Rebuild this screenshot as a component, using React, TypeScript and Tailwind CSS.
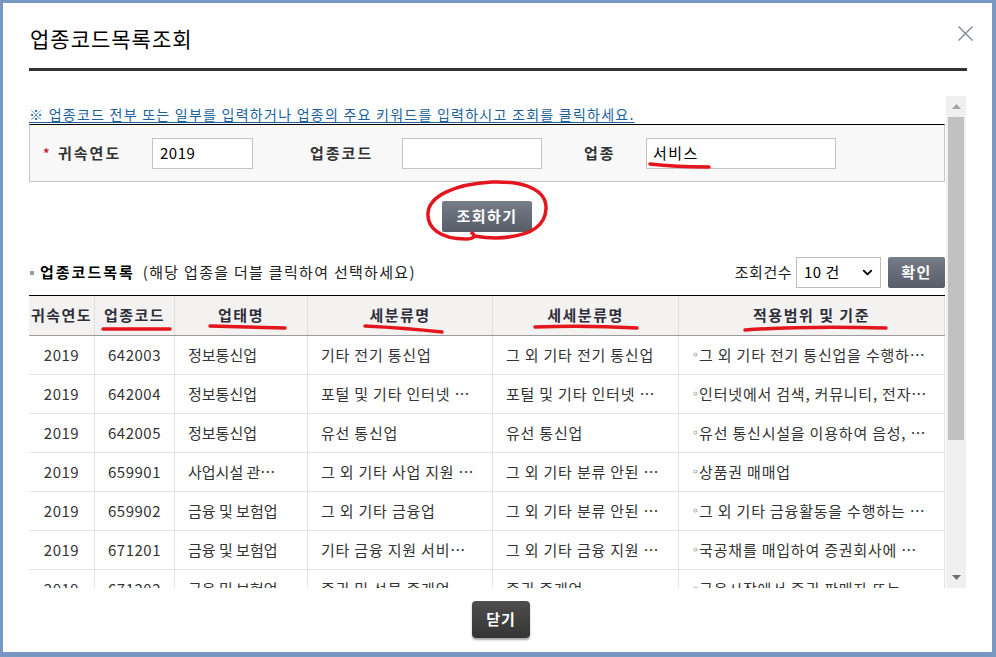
import { ChevronDown } from 'lucide-react';

const rows = [
  ['2019', '642003', '정보통신업', '기타 전기 통신업', '그 외 기타 전기 통신업', '그 외 기타 전기 통신업을 수행하…'],
  ['2019', '642004', '정보통신업', '포털 및 기타 인터넷 …', '포털 및 기타 인터넷 …', '인터넷에서 검색, 커뮤니티, 전자…'],
  ['2019', '642005', '정보통신업', '유선 통신업', '유선 통신업', '유선 통신시설을 이용하여 음성, …'],
  ['2019', '659901', '사업시설 관…', '그 외 기타 사업 지원 …', '그 외 기타 분류 안된 …', '상품권 매매업'],
  ['2019', '659902', '금융 및 보험업', '그 외 기타 금융업', '그 외 기타 분류 안된 …', '그 외 기타 금융활동을 수행하는 …'],
  ['2019', '671201', '금융 및 보험업', '기타 금융 지원 서비…', '그 외 기타 금융 지원 …', '국공채를 매입하여 증권회사에 …'],
  ['2019', '671202', '금융 및 보험업', '증권 및 선물 중개업', '증권 중개업', '금융시장에서 증권 판매자 또는 …'],
];

const headers = ['귀속연도', '업종코드', '업태명', '세분류명', '세세분류명', '적용범위 및 기준'];
const cols = 'grid grid-cols-[66px_80px_133px_185px_186px_266px]';

function RedMarks() {
  // hand-drawn red annotations lying over the dialog
  return (
    <svg
      className="absolute left-0 top-0 pointer-events-none"
      width="996"
      height="657"
      viewBox="0 0 996 657"
      fill="none"
      stroke="#e3161d"
      strokeWidth="3.5"
      strokeLinecap="round"
      strokeLinejoin="round"
    >
      <path d="M472 233 C476 236 474 239 466 239 C440 239 427 228 428 213 C429 196 455 184 492 182 C525 181 547 190 546 209 C545 228 526 237 496 238 C488 238 480 237 474 236" />
      <path d="M650 164 Q675 167 709 167" />
      <path d="M103 329 L170 329" />
      <path d="M210 326 Q250 327 285 328" />
      <path d="M365 326 Q405 328 442 332" />
      <path d="M535 327 Q585 325 637 328" />
      <path d="M745 330 Q800 326 886 328" />
    </svg>
  );
}

export default function App() {
  return (
    <div
      className="relative w-[996px] h-[657px] bg-[#7898c3] pt-[3px] pl-[3px] pr-[4px] pb-[5px] overflow-hidden"
      style={{ fontFamily: "'Noto Sans CJK KR', 'Noto Sans', sans-serif" }}
    >
      <div className="relative h-full bg-white flex flex-col">
        {/* title */}
        <div className="h-[65px] pl-[27px] pt-[23px]">
          <h2 className="text-[21px] leading-[25px] text-black tracking-[1px]">업종코드목록조회</h2>
        </div>
        <button type="button" className="absolute left-[955px] top-[23px] w-[15px] h-[15px]">
          <svg width="15" height="15" viewBox="0 0 15 15" stroke="#7d8294" strokeWidth="1.3">
            <path d="M0.5 0.5 L14.5 14.5 M14.5 0.5 L0.5 14.5" />
          </svg>
        </button>
        <div className="ml-[26px] w-[938px] h-[3px] bg-[#333]" />

        {/* scroll area */}
        <div className="ml-[26px] mt-[25px] w-[938px] h-[492px] flex">
          <div className="w-[916px] h-full overflow-hidden">
            <p className="mt-[8px] h-[20px] text-[14px] leading-[20px] text-[#1a5f9e] underline underline-offset-2 tracking-[1.25px] whitespace-nowrap">
              ※ 업종코드 전부 또는 일부를 입력하거나 업종의 주요 키워드를 입력하시고 조회를 클릭하세요.
            </p>

            <div className="h-[58px] bg-[#f8f8f8] border border-[#c6c6c6] border-t-black flex items-center pl-[13px] text-[15px] text-[#333] font-bold">
              <span className="w-[15px] text-[#c4262c] text-[13px]">*</span>
              <span className="w-[94px] tracking-[2px]">귀속연도</span>
              <div className="w-[101px] h-[31px] border border-[#c3c3c3] bg-white px-[7px] flex items-center font-normal text-black tracking-[0.5px]">2019</div>
              <span className="ml-[57px] w-[92px] tracking-[2px]">업종코드</span>
              <div className="w-[140px] h-[31px] border border-[#c3c3c3] bg-white" />
              <span className="ml-[42px] w-[62px] tracking-[2px]">업종</span>
              <div className="w-[190px] h-[31px] border border-[#c3c3c3] bg-white px-[6px] flex items-center font-normal text-black tracking-[1.5px]">서비스</div>
            </div>

            <div className="mt-[19px] flex pl-[413px]">
              <button
                type="button"
                className="w-[90px] h-[31px] rounded-[2px] bg-gradient-to-b from-[#777d88] to-[#565c68] text-white text-[15px] font-bold tracking-[1.5px]"
              >
                조회하기
              </button>
            </div>

            <div className="mt-[25px] h-[31px] flex items-center">
              <span className="w-[4px] h-[4px] bg-[#9a9a9a] ml-[1px]" />
              <span className="ml-[6px] text-[15px] font-bold text-black tracking-[2px]">업종코드목록</span>
              <span className="ml-[8px] text-[15px] text-[#222] tracking-[1.3px]">(해당 업종을 더블 클릭하여 선택하세요)</span>
              <span className="ml-auto text-[15px] text-[#222] tracking-[0.5px]">조회건수</span>
              <div className="ml-[4px] w-[85px] h-[31px] border border-[#bdbdbd] bg-white flex items-center pl-[7px] pr-[5px] text-[15px] text-black">
                <span className="tracking-[0.5px]">10 건</span>
                <ChevronDown className="ml-auto w-[15px] h-[15px]" strokeWidth={3} />
              </div>
              <button
                type="button"
                className="ml-[7px] w-[57px] h-[31px] rounded-[2px] bg-gradient-to-b from-[#777d88] to-[#565c68] text-white text-[15px] font-bold tracking-[1.5px]"
              >
                확인
              </button>
            </div>

            {/* table */}
            <div className="mt-[7px] border-t border-black">
              <div className={`${cols} h-[40px] bg-[#f3f2f0] border-b border-[#9c9c9c]`}>
                {headers.map((h) => (
                  <div
                    key={h}
                    className="border-r border-[#dedede] flex items-center justify-center text-[15px] font-bold text-[#2e2e3a] tracking-[1.5px] whitespace-nowrap"
                  >
                    {h}
                  </div>
                ))}
              </div>
              {rows.map((r) => (
                <div key={r[1]} className={`${cols} h-[39px] border-b border-[#e4e4e4] text-[15px] text-[#333]`}>
                  {r.map((c, i) => (
                    <div
                      key={i}
                      className={`border-r border-[#e4e4e4] flex items-center whitespace-nowrap overflow-hidden ${
                        i < 2 ? 'justify-center tracking-[0.5px]' : 'pl-[13px]'
                      } ${i >= 3 ? 'tracking-[0.8px]' : ''}`}
                    >
                      {i === 5 && (
                        <span className="text-[12px] tracking-normal" style={{ fontFamily: "'DejaVu Sans', sans-serif" }}>
                          ◦
                        </span>
                      )}
                      {c}
                    </div>
                  ))}
                </div>
              ))}
            </div>
          </div>

          {/* scrollbar */}
          <div className="ml-[1px] w-[20px] h-full bg-[#f0f0f0] flex flex-col">
            <div className="h-[21px] flex items-center justify-center">
              <svg width="9" height="5" viewBox="0 0 9 5">
                <path d="M0 5 L4.5 0 L9 5 Z" fill="#a3a3a3" />
              </svg>
            </div>
            <div className="mx-[2px] h-[323px] bg-[#c1c1c1]" />
            <div className="flex-1" />
            <div className="h-[21px] flex items-center justify-center">
              <svg width="9" height="5" viewBox="0 0 9 5">
                <path d="M0 0 L4.5 5 L9 0 Z" fill="#6f6f6f" />
              </svg>
            </div>
          </div>
        </div>

        {/* footer */}
        <div className="mt-[13px] pl-[469px]">
          <button
            type="button"
            className="w-[58px] h-[37px] rounded-[4px] bg-gradient-to-b from-[#4e4e4e] to-[#343434] text-white text-[15px] font-bold tracking-[1px] shadow-[0_2px_2px_rgba(0,0,0,0.35)]"
          >
            닫기
          </button>
        </div>
      </div>
      <RedMarks />
    </div>
  );
}
